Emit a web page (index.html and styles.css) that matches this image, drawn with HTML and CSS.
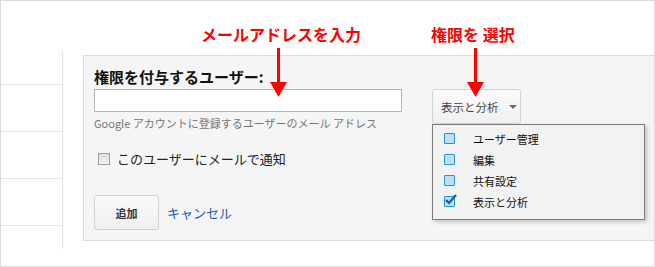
FILE: index.html
```html
<!DOCTYPE html>
<html lang="ja">
<head>
  <meta charset="UTF-8">
  <title>ユーザーの追加</title>
  <link rel="stylesheet" href="styles.css">
</head>
<body>
  <div class="frame">
    <div class="note note-email">メールアドレスを入力</div>
    <svg class="arrow arrow-email" width="17" height="49" viewBox="0 0 17 49">
      <rect x="7" y="0" width="3" height="36" fill="#f00"/>
      <polygon points="0,34 17,34 8.5,49" fill="#f00"/>
    </svg>
    <div class="note note-role">権限を 選択</div>
    <svg class="arrow arrow-role" width="17" height="49" viewBox="0 0 17 49">
      <rect x="7" y="0" width="3" height="36" fill="#f00"/>
      <polygon points="0,34 17,34 8.5,49" fill="#f00"/>
    </svg>

    <div class="sidebar">
      <div class="side-row first"></div>
      <div class="side-row"></div>
      <div class="side-row"></div>
      <div class="side-row"></div>
      <div class="side-row last"></div>
    </div>

    <div class="panel">
      <div class="form-main">
        <div class="field-label">権限を付与するユーザー:</div>
        <input class="email-input" type="text" aria-label="メールアドレス">
        <div class="hint">Google アカウントに登録するユーザーのメール アドレス</div>
        <label class="notify"><span class="gray-box"></span>このユーザーにメールで通知</label>
        <div class="actions">
          <button class="btn-add">追加</button>
          <a class="cancel" href="#">キャンセル</a>
        </div>
      </div>

      <div class="role">
        <button class="role-btn">表示と分析<span class="caret"></span></button>
        <ul class="role-menu">
          <li><span class="blue-box"></span>ユーザー管理</li>
          <li><span class="blue-box"></span>編集</li>
          <li><span class="blue-box"></span>共有設定</li>
          <li>
            <span class="blue-box checked">
              <svg width="14" height="13" viewBox="0 0 14 13"><polyline points="2,7 5,10 12,2" fill="none" stroke="#1d5a96" stroke-width="2.2"/></svg>
            </span>表示と分析
          </li>
        </ul>
      </div>
    </div>
  </div>
</body>
</html>
```

FILE: styles.css
```css
body {
  margin: 0;
  font-family: "Noto Sans CJK JP", "Liberation Sans", sans-serif;
  color: #222;
  background: #fff;
}

.frame {
  position: relative;
  width: 655px;
  height: 267px;
  box-sizing: border-box;
  border: 1px solid #dcdcdc;
  padding-top: 50px;
  display: flex;
  align-items: flex-start;
  overflow: hidden;
}

/* callouts */
.note {
  position: absolute;
  top: 23px;
  font-size: 16px;
  line-height: 20px;
  font-weight: bold;
  color: #f00;
  white-space: nowrap;
  z-index: 2;
}

.note-email {
  left: 200px;
}

.note-role {
  left: 430px;
}

.arrow {
  position: absolute;
  top: 47px;
  z-index: 2;
}

.arrow-email {
  left: 269px;
}

.arrow-role {
  left: 466px;
}

/* left list */
.sidebar {
  width: 61px;
  height: 198px;
  border-right: 1px solid #e0e0e0;
  display: flex;
  flex-direction: column;
}

.side-row {
  height: 46px;
  border-bottom: 1px solid #e6e6e6;
}

.side-row.first {
  height: 33px;
}

.side-row.last {
  flex: 1;
  border-bottom: none;
}

/* form panel */
.panel {
  flex: 1;
  margin-top: 4px;
  margin-left: 20px;
  height: 186px;
  box-sizing: border-box;
  border: 1px solid #dedede;
  border-right: none;
  background: #f5f5f5;
  padding: 11px 0 0 10px;
  display: flex;
  align-items: flex-start;
  gap: 30px;
}

.form-main {
  width: 308px;
}

.field-label {
  font-size: 15px;
  line-height: 20px;
  font-weight: bold;
  color: #111;
}

.email-input {
  display: block;
  margin: 2px 0 0;
  width: 308px;
  height: 23px;
  box-sizing: border-box;
  border: 1px solid #b5b5b5;
  background: #fff;
  padding: 0 4px;
}

.hint {
  margin-top: 3px;
  font-size: 11px;
  line-height: 16px;
  color: #777;
  white-space: nowrap;
}

.notify {
  display: flex;
  align-items: center;
  margin-top: 18px;
  margin-left: 4px;
  font-size: 13px;
  line-height: 20px;
  color: #222;
}

.gray-box {
  width: 12px;
  height: 12px;
  box-sizing: border-box;
  border: 1px solid #9a9a9a;
  background: linear-gradient(#dcdcdc, #f0f0f0);
  margin-right: 7px;
}

.actions {
  display: flex;
  align-items: center;
  margin-top: 26px;
}

.btn-add {
  width: 65px;
  height: 35px;
  box-sizing: border-box;
  border: 1px solid #cfcfcf;
  border-radius: 3px;
  background: linear-gradient(#fbfbfb, #efefef);
  font-family: inherit;
  font-size: 11px;
  font-weight: bold;
  color: #333;
  padding: 0;
}

.cancel {
  margin-left: 8px;
  font-size: 13px;
  color: #1a5cc0;
  text-decoration: none;
}

/* role dropdown */
.role {
  position: relative;
  margin-top: 22px;
}

.role-btn {
  display: flex;
  align-items: center;
  width: 89px;
  height: 35px;
  box-sizing: border-box;
  border: 1px solid #d3d3d3;
  border-radius: 3px;
  background: linear-gradient(#fbfbfb, #f0f0f0);
  padding: 0 0 0 8px;
  font-family: inherit;
  font-size: 11.5px;
  color: #444;
}

.caret {
  margin-left: 10px;
  width: 0;
  height: 0;
  border-left: 4px solid transparent;
  border-right: 4px solid transparent;
  border-top: 4px solid #6a6a6a;
}

.role-menu {
  position: absolute;
  top: 35px;
  left: 0;
  width: 213px;
  box-sizing: border-box;
  margin: 0;
  padding: 3px 0 7px;
  list-style: none;
  background: #f2f2f2;
  border: 1px solid #7b7b7b;
  box-shadow: 2px 2px 4px rgba(0, 0, 0, 0.22);
  z-index: 3;
}

.role-menu li {
  display: flex;
  align-items: center;
  height: 21px;
  padding-left: 11px;
  font-size: 11px;
  color: #111;
}

.blue-box {
  position: relative;
  flex: none;
  width: 11px;
  height: 11px;
  box-sizing: border-box;
  border: 1px solid #1f97d4;
  border-radius: 1px;
  background: #bfdff8;
  margin-right: 18px;
}

.blue-box svg {
  position: absolute;
  left: -1px;
  top: -4px;
}
```
